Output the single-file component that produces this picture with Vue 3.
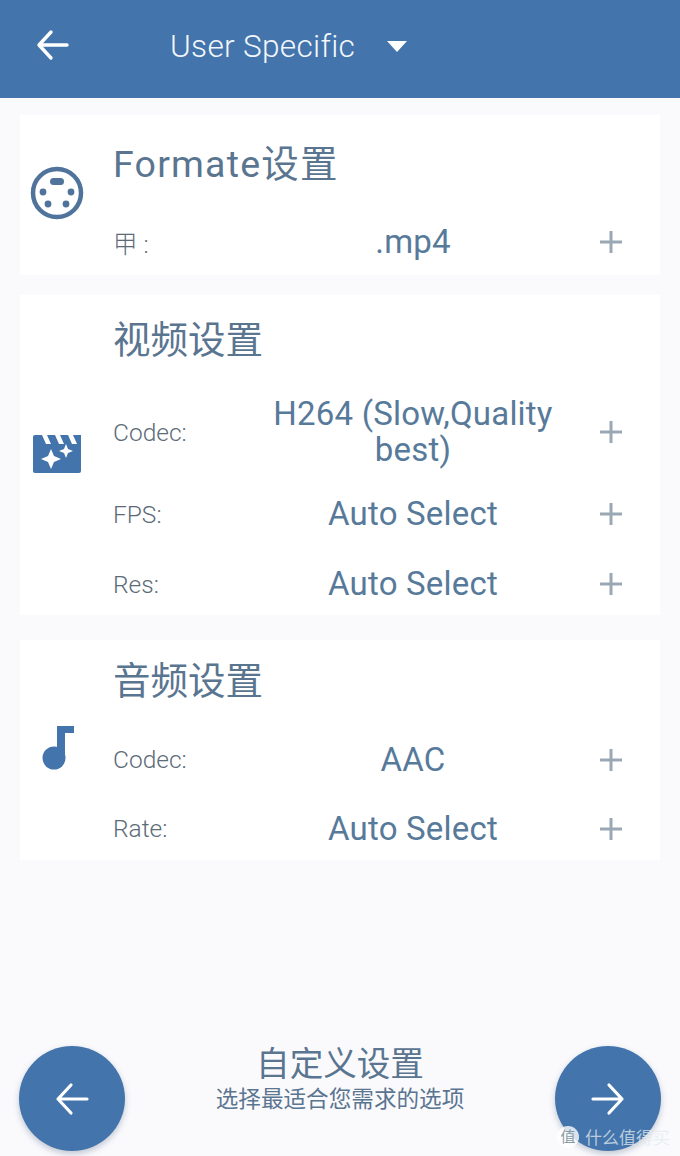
<script setup>
const cards = [
  { title: 'Formate设置', icon: 'plug', cls: 'c1', rows: [{ label: '甲 :', value: '.mp4', h: 'r-fmt' }] },
  { title: '视频设置', icon: 'clap', cls: 'c2', rows: [
    { label: 'Codec:', value: 'H264 (Slow,Quality best)', h: 'r-two' },
    { label: 'FPS:', value: 'Auto Select', h: 'r-one' },
    { label: 'Res:', value: 'Auto Select', h: 'r-one' }
  ] },
  { title: '音频设置', icon: 'note', cls: 'c3', rows: [
    { label: 'Codec:', value: 'AAC', h: 'r-one' },
    { label: 'Rate:', value: 'Auto Select', h: 'r-one' }
  ] }
]
</script>

<template>
  <div class="page">
    <header class="bar">
      <svg class="back" width="34" height="34" viewBox="0 0 34 34" fill="none" stroke="#fff" stroke-width="3.4" stroke-linecap="round" stroke-linejoin="round">
        <path d="M31 16H3M15 3 3 16l12 13" />
      </svg>
      <span class="bar-title">User Specific</span>
      <svg class="caret" width="20" height="11" viewBox="0 0 20 11"><path d="M0 0h20L10 11z" fill="#fff" /></svg>
    </header>

    <main class="cards">
      <section v-for="c in cards" :key="c.title" class="card" :class="c.cls">
        <div class="icon-col">
          <svg v-if="c.icon === 'plug'" width="54" height="54" viewBox="0 0 54 54" fill="#4f739b">
            <circle cx="27" cy="27" r="24" fill="none" stroke="#4f739b" stroke-width="4.5" />
            <rect x="20" y="12" width="14" height="7" rx="3.5" />
            <circle cx="13" cy="26" r="3.4" /><circle cx="41" cy="26" r="3.4" />
            <circle cx="18" cy="38" r="3.4" /><circle cx="36" cy="38" r="3.4" />
          </svg>
          <svg v-else-if="c.icon === 'clap'" width="48" height="38" viewBox="0 0 48 38">
            <path d="M0 2a2 2 0 0 1 2-2h7l4 9h5L14 0h8l4 9h5L27 0h8l4 9h5L40 0h8v36a2 2 0 0 1-2 2H2a2 2 0 0 1-2-2z" fill="#4374ab" />
            <path d="M18 14l3 7 7 3-7 3-3 7-3-7-7-3 7-3z" fill="#fff" />
            <path d="M33 9l2 5 5 2-5 2-2 5-2-5-5-2 5-2z" fill="#fff" />
          </svg>
          <svg v-else width="32" height="44" viewBox="0 0 32 44" fill="#4374ab">
            <circle cx="12" cy="32" r="11.5" />
            <rect x="15" y="0" width="8" height="32" />
            <rect x="15" y="0" width="17" height="7" />
          </svg>
        </div>
        <div class="body">
          <h2 class="title">{{ c.title }}</h2>
          <div v-for="r in c.rows" :key="r.label" class="row" :class="r.h">
            <span class="label">{{ r.label }}</span>
            <span class="value">{{ r.value }}</span>
            <svg class="plus" width="22" height="22" viewBox="0 0 22 22" stroke="#9aa8b6" stroke-width="3"><path d="M11 0v22M0 11h22" /></svg>
          </div>
        </div>
      </section>
    </main>

    <footer class="foot">
      <button class="fab" type="button">
        <svg width="34" height="34" viewBox="0 0 34 34" fill="none" stroke="#fff" stroke-width="3.2" stroke-linecap="round" stroke-linejoin="round"><path d="M32 17H3M16 3 3 17l13 14" /></svg>
      </button>
      <div class="foot-text">
        <div class="foot-title">自定义设置</div>
        <div class="foot-sub">选择最适合您需求的选项</div>
      </div>
      <button class="fab" type="button">
        <svg width="34" height="34" viewBox="0 0 34 34" fill="none" stroke="#fff" stroke-width="3.2" stroke-linecap="round" stroke-linejoin="round"><path d="M2 17h29M18 3l13 14-13 14" /></svg>
      </button>
      <div class="mark"><span class="mark-icon">值</span><span>什么值得买</span></div>
    </footer>
  </div>
</template>

<style>
html, body { margin: 0; background: #fafafd; }
</style>

<style scoped>
.page {
  position: relative;
  width: 680px;
  height: 1156px;
  overflow: hidden;
  display: flex;
  flex-direction: column;
  background: #fafafd;
  font-family: Roboto, "Noto Sans CJK SC", sans-serif;
  color: #4f7094;
}
.bar {
  height: 98px;
  flex: none;
  display: flex;
  align-items: center;
  background: #4374ab;
  box-sizing: border-box;
  padding: 0 0 6px 36px;
  color: #f2f7fb;
}
.back { margin-right: 100px; }
.bar-title { font-size: 31.6px; font-weight: 300; letter-spacing: 0.3px; }
.caret { margin-left: 32px; }
.cards {
  display: flex;
  flex-direction: column;
  padding: 17px 20px 0;
}
.card {
  display: flex;
  background: #fff;
}
.c1 { height: 160px; }
.c2 { height: 320px; margin-top: 20px; }
.c3 { height: 220px; margin-top: 25px; }
.icon-col {
  width: 93px;
  flex: none;
  display: flex;
  justify-content: flex-start;
  align-items: center;
  box-sizing: border-box;
}
.c1 .icon-col { padding: 0 0 4px 10px; }
.c2 .icon-col { padding: 0 0 0 13px; margin-top: -2px; }
.c3 .icon-col { padding: 0 0 0 22px; }
.c3 .icon-col svg { margin-top: -4px; }
.body { flex: 1; min-width: 0; }
.title {
  margin: 0;
  font-size: 37.5px;
  font-weight: 400;
  color: #5a7590;
}
.c1 .title { height: 100px; line-height: 98px; letter-spacing: 1.2px; }
.c2 .title { height: 90px; line-height: 91px; }
.c3 .title { height: 85px; line-height: 82px; }
.row {
  display: flex;
  align-items: center;
}
.r-fmt { height: 54px; }
.r-two { height: 94px; }
.r-one { height: 70px; }
.c3 .r-one { height: 69px; }
.label {
  width: 120px;
  flex: none;
  font-size: 24.5px;
  font-weight: 300;
  color: #5c6b78;
}
.value {
  width: 360px;
  flex: none;
  text-align: center;
  font-size: 33px;
  line-height: 36px;
  color: #587a9a;
  letter-spacing: 0.2px;
}
.r-two .value { padding: 0 30px; box-sizing: border-box; }
.plus { margin-left: 7px; }
.foot {
  position: relative;
  margin-top: auto;
  height: 110px;
  display: flex;
  align-items: flex-start;
  justify-content: space-between;
  padding: 0 19px;
}
.fab {
  width: 106px;
  height: 105px;
  border: 0;
  padding: 0;
  border-radius: 50%;
  background: #4374ab;
  box-shadow: 0 3px 6px rgba(60, 80, 110, 0.3);
  display: flex;
  align-items: center;
  justify-content: center;
}
.foot-text { text-align: center; color: #5a7590; }
.foot-title { font-size: 33.6px; line-height: 38px; }
.foot-sub { font-size: 22.6px; line-height: 32px; }
.mark {
  position: absolute;
  right: 10px;
  bottom: 7px;
  display: flex;
  align-items: center;
  gap: 6px;
  font-size: 17px;
  color: rgba(225, 235, 240, 0.75);
}
.mark-icon {
  width: 22px;
  height: 22px;
  border-radius: 50%;
  background: rgba(255, 255, 255, 0.8);
  color: #8a9aa5;
  font-size: 15px;
  line-height: 22px;
  text-align: center;
}
</style>
